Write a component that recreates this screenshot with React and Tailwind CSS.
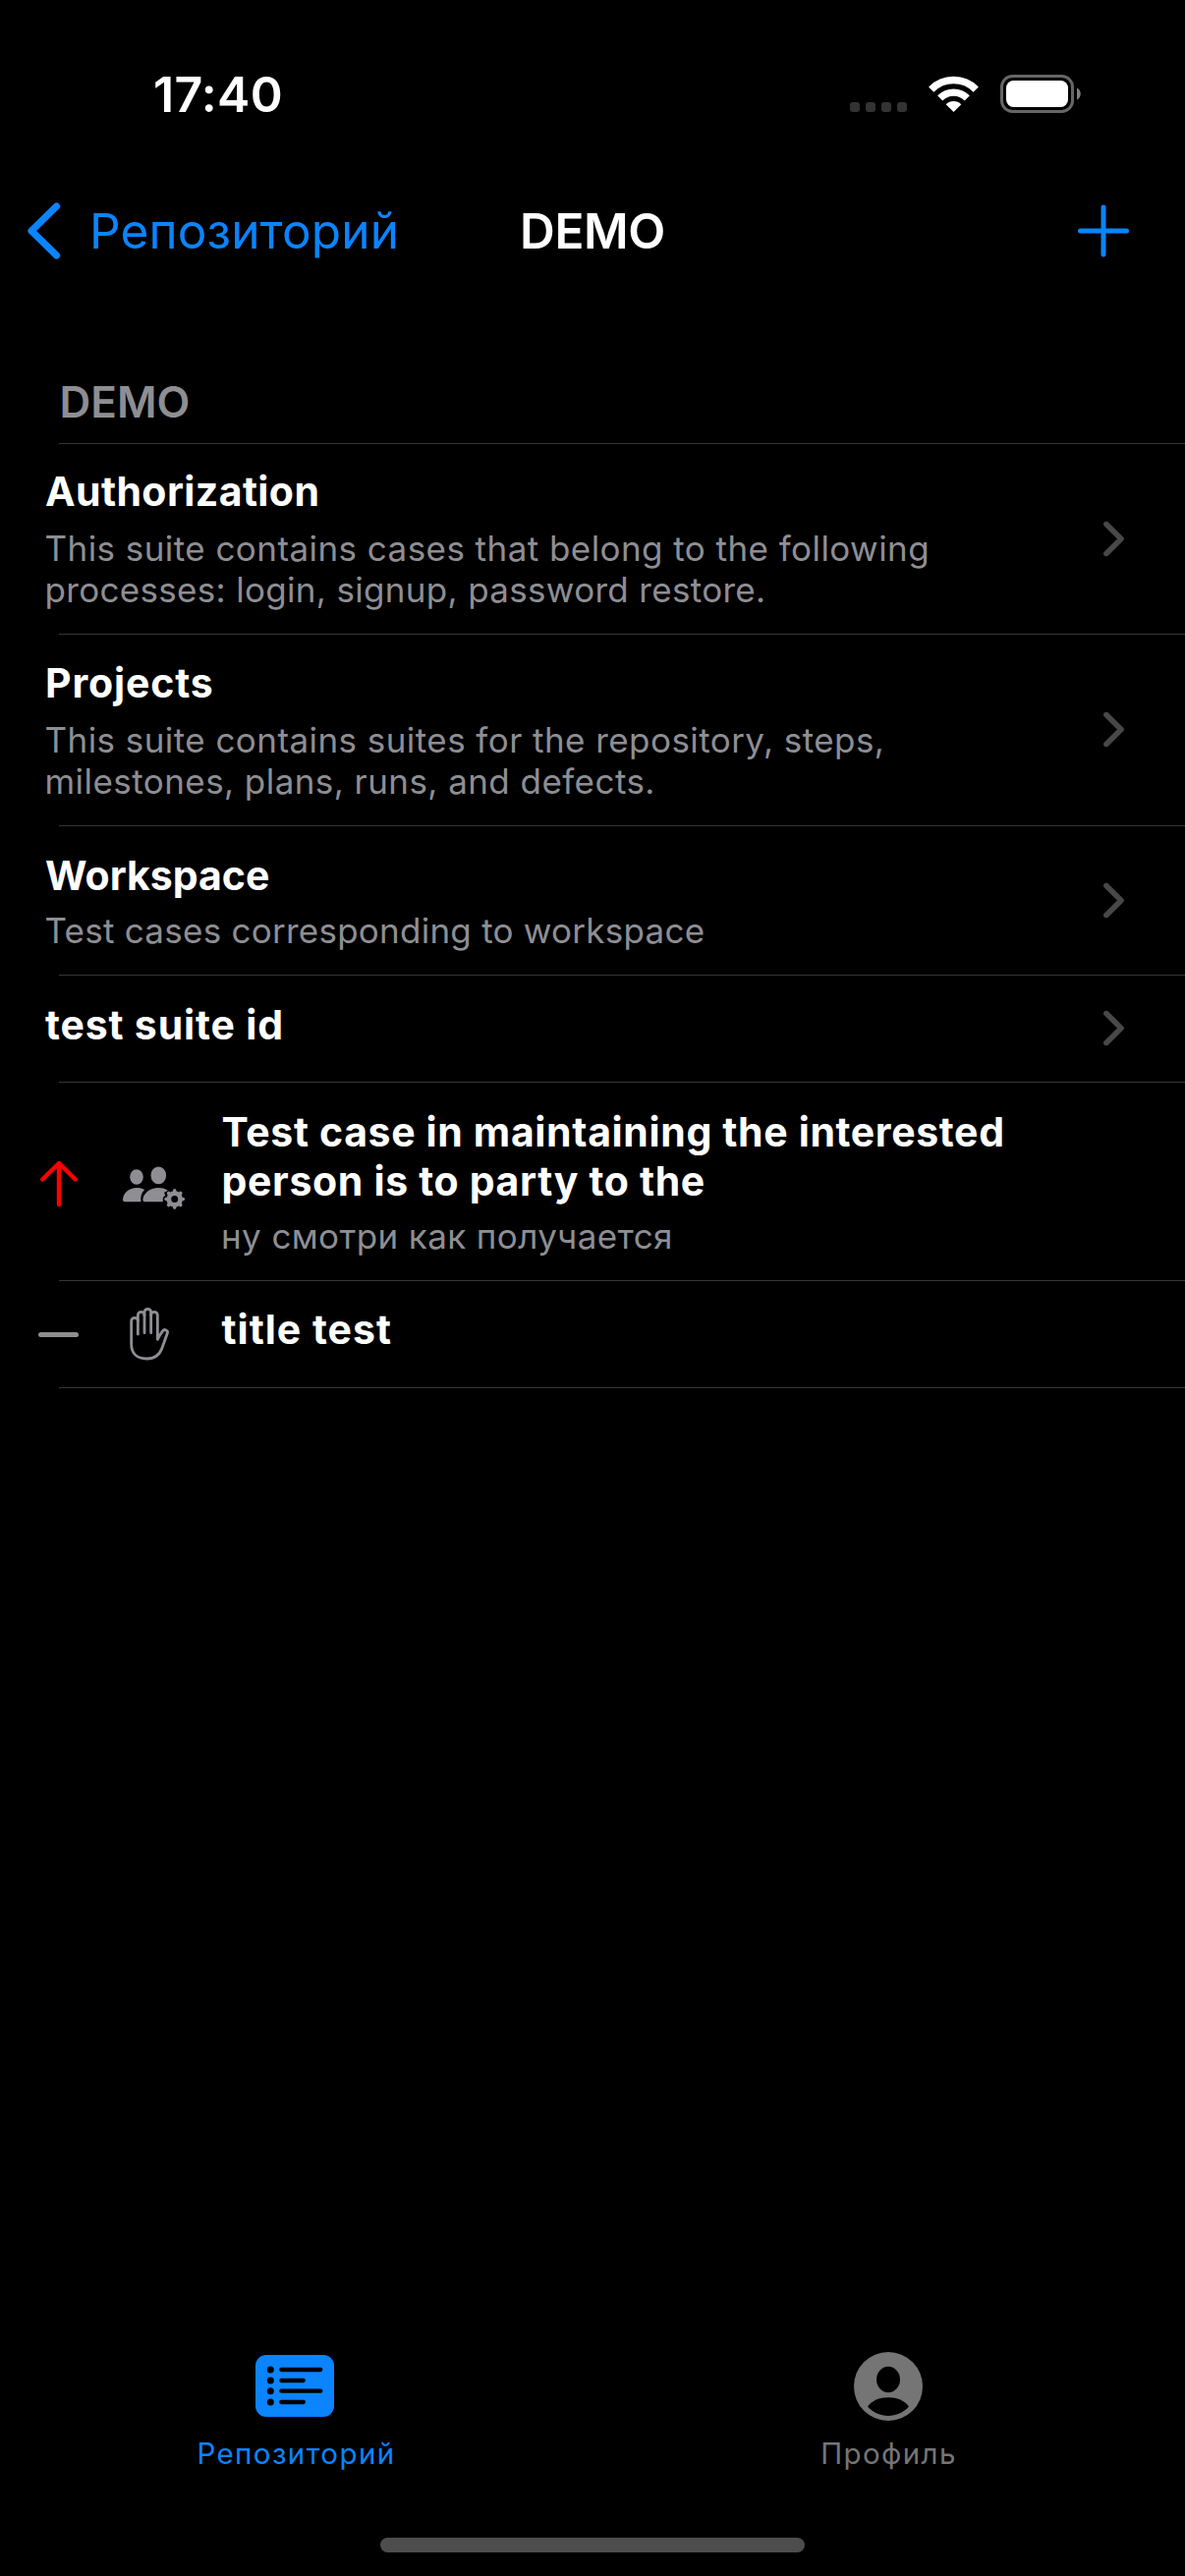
import React from "react";

function WifiIcon() {
  return (
    <svg width="51" height="40" viewBox="0 0 51 40" fill="none" stroke="#fff">
      <path d="M2.75 15.1A31.9 31.9 0 0 1 48.25 15.1" strokeWidth="7.4" />
      <path d="M11.7 23.9A19.4 19.4 0 0 1 39.3 23.9" strokeWidth="7.2" />
      <path d="M25.5 38L17.7 30.2A11 11 0 0 1 33.3 30.2Z" fill="#fff" stroke="none" />
    </svg>
  );
}

function BatteryIcon() {
  return (
    <svg width="84" height="40" viewBox="0 0 84 40" fill="none">
      <rect x="2.5" y="1.5" width="72" height="36" rx="11" stroke="#666" strokeWidth="3" />
      <rect x="7" y="6" width="63" height="27" rx="7.5" fill="#fff" />
      <path d="M79 13.5C84 15.8 84 23.2 79 25.5Z" fill="#808080" />
    </svg>
  );
}

function SignalDots() {
  return (
    <div className="mt-[28px] flex gap-[6px]">
      {[0, 1, 2, 3].map((i) => (
        <span key={i} className="h-[10px] w-[10px] rounded-[3px] bg-[#333333]" />
      ))}
    </div>
  );
}

function BackIcon() {
  return (
    <svg width="34" height="58" viewBox="0 0 34 58" fill="none" stroke="#0a84ff" strokeWidth="7.2" strokeLinecap="round" strokeLinejoin="round">
      <path d="M29.5 4L4 29L29.5 54" />
    </svg>
  );
}

function PlusIcon() {
  return (
    <svg width="52" height="54" viewBox="0 0 52 54" fill="none" stroke="#0a84ff" strokeWidth="5" strokeLinecap="round">
      <path d="M26 3V51M2.5 27H49.5" />
    </svg>
  );
}

function Chevron() {
  return (
    <svg className="-translate-y-[0.5px]" width="21" height="36" viewBox="0 0 21 36" fill="none" stroke="#48484a" strokeWidth="5.6" strokeLinecap="round" strokeLinejoin="round">
      <path d="M2.9 3L18 18L2.9 33" />
    </svg>
  );
}

function ArrowUpIcon() {
  return (
    <svg className="mt-[4px]" width="42" height="48" viewBox="0 0 42 48" fill="none" stroke="#ff0000" strokeWidth="4.4" strokeLinecap="round" strokeLinejoin="round">
      <path d="M21 45V3M4.3 19.5L21 3L37.7 19.5" />
    </svg>
  );
}

function MinusIcon() {
  return <span className="block h-[5px] w-[41px] rounded-full bg-[#8e8e93]" />;
}

const TEETH = [0, 45, 90, 135, 180, 225, 270, 315];

function PeopleGearIcon() {
  return (
    <svg className="mt-[13px]" width="64" height="45" viewBox="0 0 64 45" fill="#8e8e93">
      <ellipse cx="14" cy="11" rx="6.8" ry="7.7" />
      <ellipse cx="36.3" cy="9.4" rx="7.8" ry="8.9" />
      <path d="M0 34.3C0.2 27 6.5 22 14 22C17 22 19.7 22.6 22.1 24C18.8 27.2 17.7 31.5 18.5 36.3H2.2C0.8 36.3 0 35.5 0 34.3Z" />
      <path d="M20.4 34.3C20.6 27.5 28 22 36.3 22C39.8 22 43 22.8 45.7 24.5C44.7 25.9 43.5 26.4 42.8 26.1C41.9 27.5 42.6 28.6 43.3 29.6C41.8 31 40.7 31.8 40.8 33.5C40.9 34.8 40.6 35.5 41 36.3H22.6C21.1 36.3 20.4 35.5 20.4 34.3Z" />
      <circle cx="52.7" cy="33.5" r="5.9" fill="none" stroke="#8e8e93" strokeWidth="4.8" />
      <g stroke="#8e8e93" strokeWidth="3.6" strokeLinecap="round">
        {TEETH.map((a) => (
          <path key={a} d="M52.7 26.6V24.9" transform={`rotate(${a} 52.7 33.5)`} />
        ))}
      </g>
    </svg>
  );
}

function HandIcon() {
  return (
    <svg className="ml-[5px]" width="44" height="57.3" viewBox="390 745 132 172" fill="none" stroke="#8e8e93" strokeWidth="8.5" strokeLinecap="round" strokeLinejoin="round">
      <path d="M421 832V792A10 10 0 0 0 401 792V862C401 892 420 907 448 907C474 907 488 893 495 874L511 829C514 821 502 815 497 822C491 830 486 838 481 848V774A10 10 0 0 0 461 774" />
      <path d="M421 792V774A10 10 0 0 1 441 774V828" />
      <path d="M441 774V765A10 10 0 0 1 461 765V828" />
    </svg>
  );
}

function ListIcon() {
  return (
    <svg width="80" height="63" viewBox="0 0 80 63">
      <rect width="80" height="63" rx="11" fill="#0a84ff" />
      {[15, 26, 36.7, 48].map((y, i) => (
        <g key={y}>
          <circle cx="15.3" cy={y} r="3.5" fill="#000" />
          <path d={i % 2 ? `M26.3 ${y}H48.8` : `M26.3 ${y}H66.3`} stroke="#000" strokeWidth="4.3" strokeLinecap="round" />
        </g>
      ))}
    </svg>
  );
}

function ProfileIcon() {
  return (
    <svg width="70" height="70" viewBox="0 0 70 70">
      <circle cx="35" cy="35" r="35" fill="#757575" />
      <ellipse cx="35" cy="28" rx="12" ry="13.2" fill="#000" />
      <path d="M14 55.5C22 43 48 43 56 55.5C45 68 25 68 14 55.5Z" fill="#000" />
    </svg>
  );
}

function Separator() {
  return <div className="ml-[60px] h-px bg-[#353538]" />;
}

function Lines({ items, className }) {
  return (
    <div className={className}>
      {items.map(([text, tracking]) => (
        <div key={text} className={tracking}>{text}</div>
      ))}
    </div>
  );
}

const TITLE = "text-[41px] font-bold leading-[50px] text-white";
const DESC = "-ml-[0.5px] text-[35px] leading-[42px] text-[#8e8e93]";

const SUITES = [
  {
    box: "h-[193px] pt-[23px]",
    title: [["Authorization", "tracking-[0.4px]"]],
    gap: "mt-[12px]",
    desc: [
      ["This suite contains cases that belong to the following", "tracking-[0.44px]"],
      ["processes: login, signup, password restore.", "tracking-[0.32px]"],
    ],
  },
  {
    box: "h-[194px] pt-[24px]",
    title: [["Projects", "tracking-[0.85px]"]],
    gap: "mt-[12px]",
    desc: [
      ["This suite contains suites for the repository, steps,", "tracking-[0.44px]"],
      ["milestones, plans, runs, and defects.", "tracking-[0.44px]"],
    ],
  },
  {
    box: "h-[151px] pt-[25px]",
    title: [["Workspace", "tracking-[0px]"]],
    gap: "mt-[10px]",
    desc: [["Test cases corresponding to workspace", "tracking-[0.25px]"]],
  },
  { box: "h-[108px] pt-[25px]", title: [["test suite id", "tracking-[0.83px]"]] },
];

const CASES = [
  {
    box: "h-[201px] pt-[25px]",
    priority: <ArrowUpIcon />,
    type: <PeopleGearIcon />,
    title: [
      ["Test case in maintaining the interested", "tracking-[0.64px]"],
      ["person is to party to the", "tracking-[0.66px]"],
    ],
    gap: "mt-[10px]",
    desc: [["ну смотри как получается", "tracking-[0.39px]"]],
  },
  {
    box: "h-[108px] pt-[24px]",
    priority: <MinusIcon />,
    type: <HandIcon />,
    title: [["title test", "tracking-[1px]"]],
  },
];

function Texts({ row }) {
  return (
    <div className={`flex-1 whitespace-nowrap ${row.box}`}>
      <Lines items={row.title} className={TITLE} />
      {row.desc && <Lines items={row.desc} className={`${DESC} ${row.gap}`} />}
    </div>
  );
}

export default function App() {
  return (
    <div className="flex h-[2622px] w-[1206px] flex-col overflow-hidden bg-black font-['Inter',sans-serif]">
      <header className="flex h-[202px] shrink-0 justify-between pl-[156px] pr-[105px]">
        <div className="mt-[66px] h-[60px] text-[50px] font-semibold leading-[60px] tracking-[0.3px] text-white">17:40</div>
        <div className="mt-[76px] flex">
          <SignalDots />
          <div className="ml-[22px]"><WifiIcon /></div>
          <div className="ml-[21px]"><BatteryIcon /></div>
        </div>
      </header>

      <nav className="grid h-[66px] shrink-0 grid-cols-[1fr_auto_1fr] items-center text-[49.5px] leading-[66px]">
        <div className="flex items-center pl-[27.5px] text-[#0a84ff]">
          <BackIcon />
          <span className="ml-[29.5px] tracking-[0.15px]">Репозиторий</span>
        </div>
        <div className="font-semibold tracking-[-0.35px] text-white">DEMO</div>
        <div className="flex justify-end pr-[57px]"><PlusIcon /></div>
      </nav>

      <main className="shrink-0 pt-[114px]">
        <h2 className="mb-[15px] pl-[60.5px] text-[44px] font-semibold leading-[54px] text-[#8e8e93]">DEMO</h2>
        <Separator />
        {SUITES.map((row) => (
          <section key={row.title[0][0]}>
            <div className="flex items-center pl-[46px] pr-[62px]">
              <Texts row={row} />
              <Chevron />
            </div>
            <Separator />
          </section>
        ))}
        {CASES.map((row) => (
          <section key={row.title[0][0]}>
            <div className="flex items-center pl-[39px]">
              <div className="w-[42px]">{row.priority}</div>
              <div className="ml-[44px] w-[64px]">{row.type}</div>
              <div className="ml-[36.5px] flex flex-1"><Texts row={row} /></div>
            </div>
            <Separator />
          </section>
        ))}
      </main>

      <footer className="mt-auto shrink-0">
        <div className="grid grid-cols-2 text-[29.5px] leading-[36px] tracking-[1.4px]">
          <div className="flex flex-col items-center text-[#0a84ff]">
            <div className="flex h-[72px] items-center pb-[2px] pr-[3px]"><ListIcon /></div>
            <span className="mt-[14px]">Репозиторий</span>
          </div>
          <div className="flex flex-col items-center text-[#757575]">
            <div className="flex h-[72px] items-center pr-[2px]"><ProfileIcon /></div>
            <span className="mt-[14px]">Профиль</span>
          </div>
        </div>
        <div className="mx-auto mb-[24px] mt-[68px] h-[15px] w-[432px] rounded-full bg-[#4d4d4d]" />
      </footer>
    </div>
  );
}
